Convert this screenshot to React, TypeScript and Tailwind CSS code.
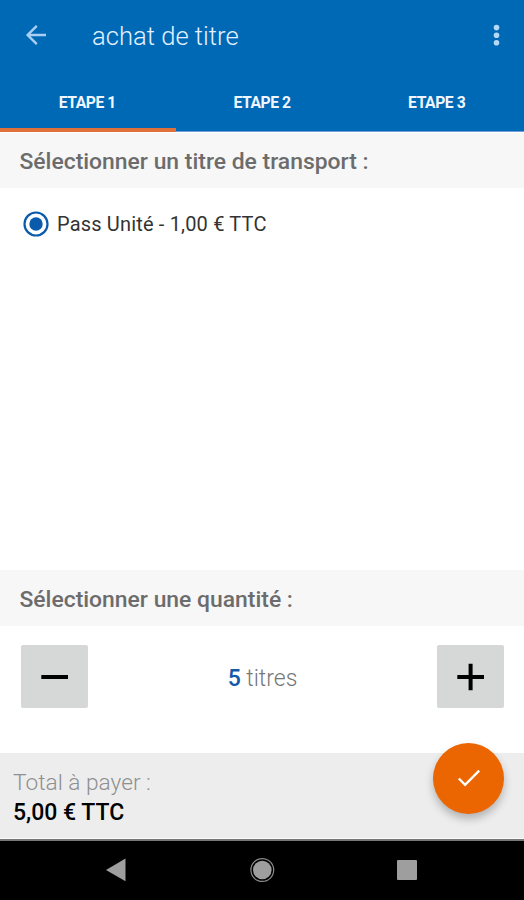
import React from "react";

function SectionHeading({ children, className = "" }: { children: React.ReactNode; className?: string }) {
  return (
    <h2
      className={
        "flex h-14 shrink-0 items-center bg-[#f7f7f7] pl-[19.5px] pt-[3px] text-[22.9px] font-medium leading-7 whitespace-nowrap text-[#6c6c6c] " +
        className
      }
    >
      {children}
    </h2>
  );
}

function Header() {
  return (
    <header className="flex h-[132px] shrink-0 flex-col border-b border-[#6f9fd8] bg-[#0069b6]">
      <div className="flex h-[71px] items-center pl-6">
        <svg width="24" height="24" viewBox="0 0 24 24" fill="none" stroke="#a9d0f3" strokeWidth="2.4">
          <path d="M22 11H4M12.8 1.8 3.6 11l9.2 9.2" />
        </svg>
        <h1 className="ml-11 flex-1 text-[25.6px] font-light leading-8 whitespace-nowrap text-[#e3f1ff]">achat de titre</h1>
        <svg className="mr-[21px]" width="12" height="24" viewBox="0 0 12 24" fill="#b5daf8">
          <circle cx="5.5" cy="3.6" r="2.8" />
          <circle cx="5.5" cy="11.2" r="2.8" />
          <circle cx="5.5" cy="18.8" r="2.8" />
        </svg>
      </div>
      <nav className="grid flex-1 grid-cols-3 text-center text-[15.7px] font-bold tracking-[-0.45px] text-[#f0f6ff]">
        <div className="relative pt-5 leading-6">
          ETAPE 1
          <span className="absolute -bottom-px left-0 h-1 w-44 bg-[#e0703a]" />
        </div>
        <div className="pt-5 leading-6">ETAPE 2</div>
        <div className="pt-5 leading-6">ETAPE 3</div>
      </nav>
    </header>
  );
}

export default function App() {
  return (
    <div className="flex h-[900px] w-[524px] flex-col overflow-hidden bg-white font-['Roboto',sans-serif]">
      <Header />
      <SectionHeading className="border-t border-white">Sélectionner un titre de transport :</SectionHeading>
      <main className="flex-1 pl-[23px] pt-[23px]">
        <label className="flex items-center text-[20px] leading-[26px] tracking-[0.17px] whitespace-nowrap text-[#333333]">
          <svg className="mr-2" width="26" height="26" viewBox="0 0 26 26">
            <circle cx="13" cy="13" r="11.5" fill="none" stroke="#0b5bad" strokeWidth="2.2" />
            <circle cx="13" cy="13" r="6.7" fill="#0b5bad" />
          </svg>
          Pass Unité - 1,00 € TTC
        </label>
      </main>
      <SectionHeading>Sélectionner une quantité :</SectionHeading>
      <section className="flex h-[127px] shrink-0 items-start justify-between pl-[21px] pr-5 pt-[19px]">
        <button className="flex h-[63px] w-[67px] items-center justify-center rounded-xs bg-[#d5d8d7]">
          <svg width="28" height="28" viewBox="0 0 28 28" stroke="#000" strokeWidth="4">
            <path d="M0.3 14H27" />
          </svg>
        </button>
        <p className="mt-[18px] text-[23px] leading-8 whitespace-nowrap font-light text-[#777777]">
          <span className="font-medium text-[#1559ab]">5</span> titres
        </p>
        <button className="flex h-[63px] w-[67px] items-center justify-center rounded-xs bg-[#d5d8d7]">
          <svg width="28" height="28" viewBox="0 0 28 28" stroke="#000" strokeWidth="4">
            <path d="M0.3 14H27M13.6 0.7V27.3" />
          </svg>
        </button>
      </section>
      <section className="relative flex h-[86px] shrink-0 flex-col border-b border-[#fafafa] bg-[#ededed] pl-[13px] pt-[15px]">
        <p className="text-[22.7px] font-light leading-[30px] whitespace-nowrap text-[#8f8f8f]">Total à payer :</p>
        <p className="text-[23px] font-medium leading-[30px] whitespace-nowrap text-black">5,00 € TTC</p>
        <button className="absolute -top-[10.5px] right-5 flex h-[71px] w-[71px] items-center justify-center rounded-full bg-[#eb6500] shadow-[0_5px_8px_rgba(0,0,0,0.25)]">
          <svg width="24" height="20" viewBox="0 0 24 20" fill="none" stroke="#fff" strokeWidth="2.4">
            <path d="m1.8 10.5 6.3 6.3L22.2 2.7" />
          </svg>
        </button>
      </section>
      <footer className="h-[61px] shrink-0 border-t-2 border-[#777777] bg-black">
        <svg width="524" height="59" viewBox="0 0 524 59" fill="#9e9e9e">
          <path d="M106 29 125.5 17.5V40.300Z" />
          <circle cx="262.3" cy="29" r="9.3" />
          <circle cx="262.3" cy="29" r="11.4" fill="none" stroke="#8a8a8a" strokeWidth="1.2" />
          <rect x="397" y="19" width="20" height="20" rx="1" />
        </svg>
      </footer>
    </div>
  );
}
